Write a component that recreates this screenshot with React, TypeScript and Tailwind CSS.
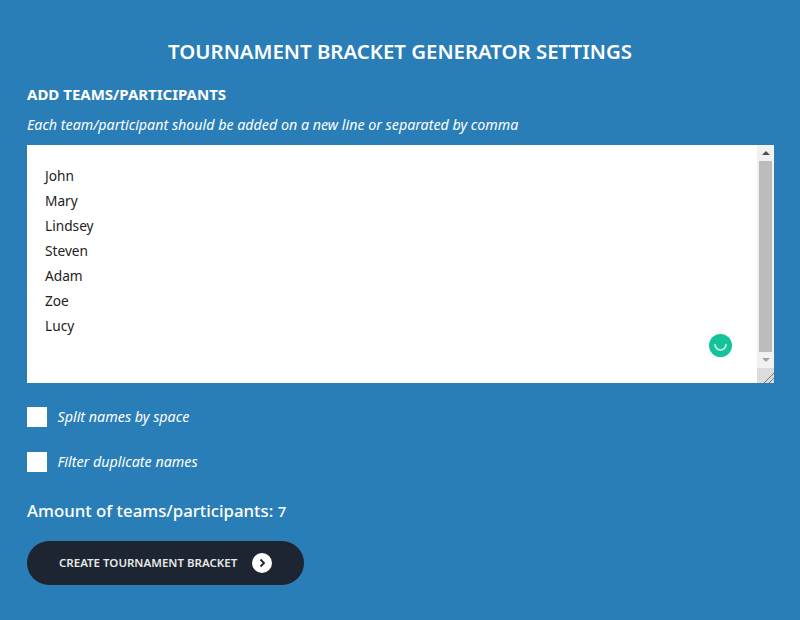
const names = ["John", "Mary", "Lindsey", "Steven", "Adam", "Zoe", "Lucy"];

export default function App() {
  return (
    <div className="h-[620px] w-[800px] overflow-hidden bg-[#2a7eb8] px-[27px] pt-[37px] font-['Noto_Sans',sans-serif] text-white">
      <h1 className="text-center text-[20.4px] leading-[28px] font-semibold">TOURNAMENT BRACKET GENERATOR SETTINGS</h1>
      <h2 className="mt-[18px] text-[15px] leading-[22px] font-bold">ADD TEAMS/PARTICIPANTS</h2>
      <p className="mt-[9px] text-[14.25px] leading-[22px] italic">Each team/participant should be added on a new line or separated by comma</p>

      {/* Textarea */}
      <div className="relative mt-[9px] flex h-[238px] w-[747px] bg-white">
        <div className="flex-1 pt-[18px] pl-[18px] text-[13.7px] leading-[25px] text-[#222]">
          {names.map((name) => (
            <div key={name}>{name}</div>
          ))}
        </div>
        <div className="flex w-[17px] flex-col bg-[#f1f1f1]">
          <div className="flex h-[16px] items-center justify-center">
            <div className="h-0 w-0 border-x-[4px] border-b-[4px] border-x-transparent border-b-[#505050]" />
          </div>
          <div className="mx-[2px] flex-1 bg-[#bcbcbc]" />
          <div className="flex h-[16px] items-center justify-center">
            <div className="h-0 w-0 border-x-[4px] border-t-[4px] border-x-transparent border-t-[#a3a3a3]" />
          </div>
          <div className="flex h-[15px] items-end justify-end bg-[#dcdcdc]">
            <svg width="12" height="12" viewBox="0 0 12 12" fill="none" stroke="#777" strokeWidth="1">
              <path d="M2 12 12 2M7 12l5-5" />
            </svg>
          </div>
        </div>
        <div className="absolute top-[189px] left-[682px] flex h-[23px] w-[23px] items-center justify-center rounded-full bg-[#15c39a]">
          <svg width="15" height="15" viewBox="0 0 15 15" fill="none" stroke="#c9f2e6" strokeWidth="1.6" strokeLinecap="round">
            <path d="M2 6.5a5.5 5.5 0 0 0 11 0" />
          </svg>
        </div>
      </div>

      <label className="mt-[24px] flex items-center gap-[11px]">
        <span className="h-[20px] w-[19.5px] bg-white" />
        <span className="text-[14.3px] leading-[20px] italic">Split names by space</span>
      </label>
      <label className="mt-[25px] flex items-center gap-[11px]">
        <span className="h-[20px] w-[19.5px] bg-white" />
        <span className="text-[14.3px] leading-[20px] italic">Filter duplicate names</span>
      </label>

      <p className="mt-[26px] text-[16.8px] leading-[26px] font-medium">
        Amount of teams/participants: <span className="text-[15px]">7</span>
      </p>

      <button className="mt-[17px] flex h-[44px] w-[277px] items-center rounded-full bg-[#1c2531] pl-[32px] text-[11.5px] font-semibold text-[#e8e8e8]">
        CREATE TOURNAMENT BRACKET
        <span className="ml-[15px] flex h-[20px] w-[20px] items-center justify-center rounded-full bg-white">
          <svg width="10" height="10" viewBox="0 0 10 10" fill="none" stroke="#1c2531" strokeWidth="1.8">
            <path d="M3.5 1.5 7 5 3.5 8.5" />
          </svg>
        </span>
      </button>
    </div>
  );
}
